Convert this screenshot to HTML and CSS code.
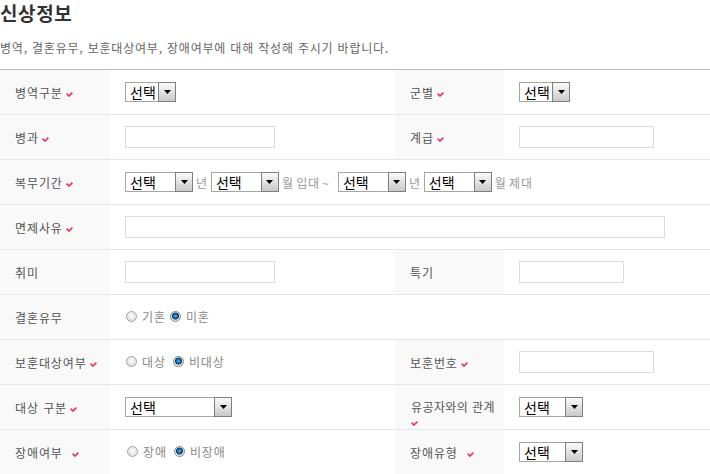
FILE: index.html
```html
<!DOCTYPE html>
<html lang="ko">
<head>
<meta charset="utf-8">
<title>신상정보</title>
<link rel="stylesheet" href="styles.css">
</head>
<body>
<h2 class="title">신상정보</h2>
<p class="desc">병역, 결혼유무, 보훈대상여부, 장애여부에 대해 작성해 주시기 바랍니다.</p>
<table class="form">
  <colgroup>
    <col class="c-lab1"><col class="c-val1"><col class="c-lab2"><col class="c-val2">
  </colgroup>
  <tr>
    <th>병역구분<svg class="chk" viewBox="0 0 7 5"><polyline points="0.6,1.6 3,4 6.4,0.6"/></svg></th>
    <td><span class="sel w51"><span class="sel-t">선택</span><span class="sel-b"><svg viewBox="0 0 7 4"><polygon points="0,0 7,0 3.5,4"/></svg></span></span></td>
    <th>군별<svg class="chk" viewBox="0 0 7 5"><polyline points="0.6,1.6 3,4 6.4,0.6"/></svg></th>
    <td><span class="sel w51"><span class="sel-t">선택</span><span class="sel-b"><svg viewBox="0 0 7 4"><polygon points="0,0 7,0 3.5,4"/></svg></span></span></td>
  </tr>
  <tr>
    <th>병과<svg class="chk" viewBox="0 0 7 5"><polyline points="0.6,1.6 3,4 6.4,0.6"/></svg></th>
    <td><input class="inp w150" type="text"></td>
    <th>계급<svg class="chk" viewBox="0 0 7 5"><polyline points="0.6,1.6 3,4 6.4,0.6"/></svg></th>
    <td><input class="inp w135" type="text"></td>
  </tr>
  <tr>
    <th>복무기간<svg class="chk" viewBox="0 0 7 5"><polyline points="0.6,1.6 3,4 6.4,0.6"/></svg></th>
    <td colspan="3">
      <div class="period">
        <span class="sel w68"><span class="sel-t">선택</span><span class="sel-b"><svg viewBox="0 0 7 4"><polygon points="0,0 7,0 3.5,4"/></svg></span></span>
        <span class="unit">년</span>
        <span class="sel w68"><span class="sel-t">선택</span><span class="sel-b"><svg viewBox="0 0 7 4"><polygon points="0,0 7,0 3.5,4"/></svg></span></span>
        <span class="unit sep">월 입대 ~</span>
        <span class="sel w68"><span class="sel-t">선택</span><span class="sel-b"><svg viewBox="0 0 7 4"><polygon points="0,0 7,0 3.5,4"/></svg></span></span>
        <span class="unit">년</span>
        <span class="sel w68"><span class="sel-t">선택</span><span class="sel-b"><svg viewBox="0 0 7 4"><polygon points="0,0 7,0 3.5,4"/></svg></span></span>
        <span class="unit">월 제대</span>
      </div>
    </td>
  </tr>
  <tr>
    <th>면제사유<svg class="chk" viewBox="0 0 7 5"><polyline points="0.6,1.6 3,4 6.4,0.6"/></svg></th>
    <td colspan="3"><input class="inp w540" type="text"></td>
  </tr>
  <tr>
    <th>취미</th>
    <td><input class="inp w150" type="text"></td>
    <th>특기</th>
    <td><input class="inp w105" type="text"></td>
  </tr>
  <tr>
    <th>결혼유무</th>
    <td colspan="3">
      <div class="radios">
        <span class="radio"></span><span class="rlab">기혼</span>
        <span class="radio on"></span><span class="rlab">미혼</span>
      </div>
    </td>
  </tr>
  <tr>
    <th>보훈대상여부<svg class="chk" viewBox="0 0 7 5"><polyline points="0.6,1.6 3,4 6.4,0.6"/></svg></th>
    <td>
      <div class="radios">
        <span class="radio"></span><span class="rlab wide">대상</span>
        <span class="radio on"></span><span class="rlab">비대상</span>
      </div>
    </td>
    <th>보훈번호<svg class="chk" viewBox="0 0 7 5"><polyline points="0.6,1.6 3,4 6.4,0.6"/></svg></th>
    <td><input class="inp w135" type="text"></td>
  </tr>
  <tr class="short">
    <th>대상 구분<svg class="chk" viewBox="0 0 7 5"><polyline points="0.6,1.6 3,4 6.4,0.6"/></svg></th>
    <td><span class="sel w107"><span class="sel-t">선택</span><span class="sel-b"><svg viewBox="0 0 7 4"><polygon points="0,0 7,0 3.5,4"/></svg></span></span></td>
    <th class="wrap">유공자와의 관계 <svg class="chk" viewBox="0 0 7 5"><polyline points="0.6,1.6 3,4 6.4,0.6"/></svg></th>
    <td><span class="sel w64"><span class="sel-t">선택</span><span class="sel-b"><svg viewBox="0 0 7 4"><polygon points="0,0 7,0 3.5,4"/></svg></span></span></td>
  </tr>
  <tr class="last">
    <th>장애여부<svg class="chk far" viewBox="0 0 7 5"><polyline points="0.6,1.6 3,4 6.4,0.6"/></svg></th>
    <td>
      <div class="radios shift">
        <span class="radio"></span><span class="rlab wide">장애</span>
        <span class="radio on"></span><span class="rlab">비장애</span>
      </div>
    </td>
    <th>장애유형<svg class="chk far" viewBox="0 0 7 5"><polyline points="0.6,1.6 3,4 6.4,0.6"/></svg></th>
    <td><span class="sel w64"><span class="sel-t">선택</span><span class="sel-b"><svg viewBox="0 0 7 4"><polygon points="0,0 7,0 3.5,4"/></svg></span></span></td>
  </tr>
</table>
</body>
</html>
```
FILE: styles.css
```css
html, body {
  margin: 0;
  padding: 0;
  background: #fff;
}
body {
  font-family: "Noto Sans CJK KR", "Noto Sans", sans-serif;
  font-size: 12px;
  color: #555;
  letter-spacing: 0.9px;
}
.title {
  margin: 0;
  padding-top: 1px;
  font-size: 19px;
  line-height: 24px;
  font-weight: bold;
  color: #333;
  letter-spacing: 0.6px;
}
.desc {
  margin: 15px 0 0;
  font-size: 12px;
  line-height: 16px;
  color: #666;
  letter-spacing: 0.8px;
}
.form {
  margin-top: 13px;
  width: 710px;
  border-collapse: collapse;
  table-layout: fixed;
  border-top: 1px solid #bcbcbc;
  border-bottom: 1px solid #bcbcbc;
}
.c-lab1 { width: 110px; }
.c-val1 { width: 285px; }
.c-lab2 { width: 109px; }
.c-val2 { width: 206px; }
.form tr {
  border-bottom: 1px solid #e6e6e6;
}
.form tr.last {
  border-bottom: 1px solid #bcbcbc;
}
.form th, .form td {
  height: 44px;
  padding: 0;
  vertical-align: middle;
  text-align: left;
}
.form tr.short th, .form tr.short td {
  height: 43px;
}
.form th {
  background: #f9f9f9;
  font-weight: normal;
  color: #555;
  padding: 0 8px 0 15px;
  line-height: 15px;
}
.form th.wrap {
  vertical-align: top;
  padding-top: 14px;
  padding-left: 16px;
  padding-right: 4px;
  box-sizing: border-box;
  letter-spacing: 0.4px;
}
.form td {
  padding-left: 15px;
}
.chk {
  width: 7px;
  height: 5px;
  margin-left: 3px;
  vertical-align: 1px;
  fill: none;
  stroke: #e5325b;
  stroke-width: 1.6;
}
.chk.far { margin-left: 9px; }
.wrap .chk { margin-left: 0; }

.inp {
  display: block;
  box-sizing: border-box;
  height: 22px;
  margin: 0;
  padding: 0 3px;
  border: 1px solid #dcdcdc;
  background: #fff;
  font: inherit;
}
.w150 { width: 150px; }
.w135 { width: 135px; }
.w105 { width: 105px; }
.w540 { width: 540px; }

.sel {
  display: inline-flex;
  vertical-align: middle;
  box-sizing: border-box;
  height: 20px;
  border: 1px solid #a6a6a6;
  background: #fff;
}
.w51 { width: 51px; }
.w68 { width: 68px; }
.w107 { width: 107px; }
.w64 { width: 64px; }
.sel-t {
  flex: 1;
  padding-left: 4px;
  font-size: 14px;
  line-height: 18px;
  color: #000;
  letter-spacing: 0;
}
.sel-b {
  display: flex;
  align-items: center;
  justify-content: center;
  box-sizing: border-box;
  width: 18px;
  height: 20px;
  margin: -1px -1px -1px 0;
  border: 1px solid #7f7f7f;
  background: linear-gradient(#fbfbfb, #e2e2e2 50%, #c9c9c9);
}
.sel-b svg {
  width: 7px;
  height: 4px;
  fill: #000;
}

.period {
  display: flex;
  align-items: center;
}
.unit {
  color: #999;
  margin: 0 3px 0 3px;
  word-spacing: -2px;
}
.unit.sep { margin-right: 8px; }

.radios {
  display: flex;
  align-items: center;
  margin-top: -2px;
  padding-left: 1px;
}
.radios.shift { padding-left: 2px; }
.radio {
  display: inline-block;
  box-sizing: border-box;
  width: 11px;
  height: 11px;
  border-radius: 50%;
  border: 1px solid #a4a4a4;
  background: radial-gradient(circle at 50% 40%, #fdfdfd 0, #e6e6e6 60%, #cfcfcf 100%);
  margin-right: 5px;
}
.radio.on {
  border-color: #8a8a8a;
  background: radial-gradient(circle at 50% 45%, #62b6ea 0, #1c6eae 1.8px, #0b3c6a 3.2px, #dedede 3.8px, #f2f2f2 100%);
}
.rlab {
  color: #888;
  margin-right: 4px;
}
.rlab.wide { margin-right: 7px; }
```
